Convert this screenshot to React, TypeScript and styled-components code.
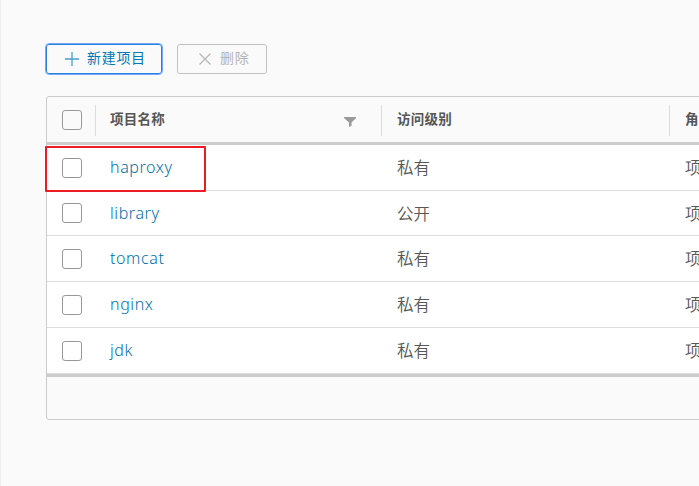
import React from "react";
import styled, { createGlobalStyle } from "styled-components";

const GlobalStyle = createGlobalStyle`
  * { box-sizing: border-box; }
  html, body { margin: 0; background: #fafafa; overflow: hidden; }
  body { font-family: "Noto Sans CJK SC", sans-serif; color: #565656; }
`;

const Page = styled.main`
  width: 699px;
  height: 486px;
  padding: 44px 0 0 45px;
  border-left: 1px solid #eeeeee;
  overflow: hidden;
  background: #fafafa;
`;

const Toolbar = styled.div`
  display: flex;
  gap: 15px;
  height: 30px;
  margin-bottom: 22px;
`;

const Button = styled.button<{ $primary?: boolean }>`
  display: flex;
  align-items: center;
  width: ${(p) => (p.$primary ? 116 : 90)}px;
  height: 30px;
  padding: 0 0 2px ${(p) => (p.$primary ? 17 : 19)}px;
  border: 1px solid ${(p) => (p.$primary ? "#2f80dc" : "#c1c1c1")};
  border-radius: 3px;
  outline: ${(p) => (p.$primary ? "1px solid #6fa9f7" : "none")};
  outline-offset: 0;
  background: transparent;
  color: ${(p) => (p.$primary ? "#0079b8" : "#b5b5b5")};
  font: 400 14px/20px "Noto Sans CJK SC", sans-serif;
  letter-spacing: 0.7px;
  white-space: nowrap;
`;

const ButtonIcon = styled.svg`
  flex: none;
  width: 16px;
  height: 16px;
  margin: 2px 7px 0 0;
  fill: none;
`;

const ButtonLabel = styled.span`
  margin-top: -2px;
`;

const Grid = styled.div`
  position: relative;
  width: 900px;
  height: 324px;
  border: 1px solid #cccccc;
  border-radius: 3px;
  background: #fafafa;
`;

const columns = "48px 286px 288px 276px";

const Header = styled.div`
  display: grid;
  grid-template-columns: ${columns};
  height: 48px;
  border-bottom: 3px solid #cccccc;
`;

const HeaderCell = styled.div<{ $shift?: number }>`
  display: flex;
  align-items: center;
  height: 31px;
  margin-top: 8px;
  padding: 0 25px 5px ${(p) => 14 + (p.$shift ?? 0)}px;
  border-left: 1px solid #dddddd;
  font-size: 13.5px;
  line-height: 20px;
  font-weight: 700;
  letter-spacing: 0.25px;
`;

const Filter = styled.svg`
  width: 12px;
  height: 10px;
  margin: 7px 0 0 auto;
  fill: #9a9a9a;
`;

const SelectCell = styled.div`
  display: flex;
  padding: 13px 0 0 15px;
`;

const Checkbox = styled.span`
  width: 20px;
  height: 20px;
  border: 1px solid #989898;
  border-radius: 3px;
`;

const Row = styled.div<{ $compact?: boolean }>`
  display: grid;
  grid-template-columns: ${columns};
  height: ${(p) => (p.$compact ? 45 : 46)}px;
  border-bottom: 1px solid #dddddd;
  background: #ffffff;

  ${SelectCell} { padding-top: ${(p) => (p.$compact ? 12 : 13)}px; }
`;

const Cell = styled.div`
  padding: 10px 0 0 16px;
  font-size: 16.5px;
  line-height: 24px;
  font-weight: 350;
  white-space: nowrap;
`;

const ProjectLink = styled.a`
  padding: 10px 0 0 15px;
  color: #006fae;
  font: 300 16px/24px "Noto Sans", sans-serif;
  letter-spacing: 0.6px;
`;

const Footer = styled.div`
  height: 45px;
  border-top: 3px solid #cccccc;
`;

const Highlight = styled.div`
  position: absolute;
  left: -2px;
  top: 49px;
  width: 161px;
  height: 46px;
  border: 2px solid #ed1c24;
  border-radius: 1px;
`;

const projects = [
  { name: "haproxy", access: "私有" },
  { name: "library", access: "公开" },
  { name: "tomcat", access: "私有" },
  { name: "nginx", access: "私有" },
  { name: "jdk", access: "私有" },
];

export default function App() {
  return (
    <>
      <GlobalStyle />
      <Page>
        <Toolbar>
          <Button $primary>
            <ButtonIcon viewBox="0 0 16 16" stroke="#49a0cd" strokeWidth="1.3">
              <path d="M8 1v14M1 8h14" />
            </ButtonIcon>
            <ButtonLabel>新建项目</ButtonLabel>
          </Button>
          <Button disabled>
            <ButtonIcon viewBox="0 0 16 16" stroke="#b5b5b5" strokeWidth="1.2">
              <path d="m2.5 2.5 11 11m0-11-11 11" />
            </ButtonIcon>
            <ButtonLabel>删除</ButtonLabel>
          </Button>
        </Toolbar>
        <Grid>
          <Header>
            <SelectCell><Checkbox /></SelectCell>
            <HeaderCell>
              项目名称
              <Filter viewBox="0 0 12 10"><path d="M0 0h12v1L7.5 5.4V9L5 10V5.4L0 1z" /></Filter>
            </HeaderCell>
            <HeaderCell $shift={1}>访问级别</HeaderCell>
            <HeaderCell $shift={1}>角色</HeaderCell>
          </Header>
          {projects.map((project, index) => (
            <Row key={project.name} $compact={index === 1}>
              <SelectCell><Checkbox /></SelectCell>
              <ProjectLink>{project.name}</ProjectLink>
              <Cell>{project.access}</Cell>
              <Cell>项目管理员</Cell>
            </Row>
          ))}
          <Footer />
          <Highlight />
        </Grid>
      </Page>
    </>
  );
}
